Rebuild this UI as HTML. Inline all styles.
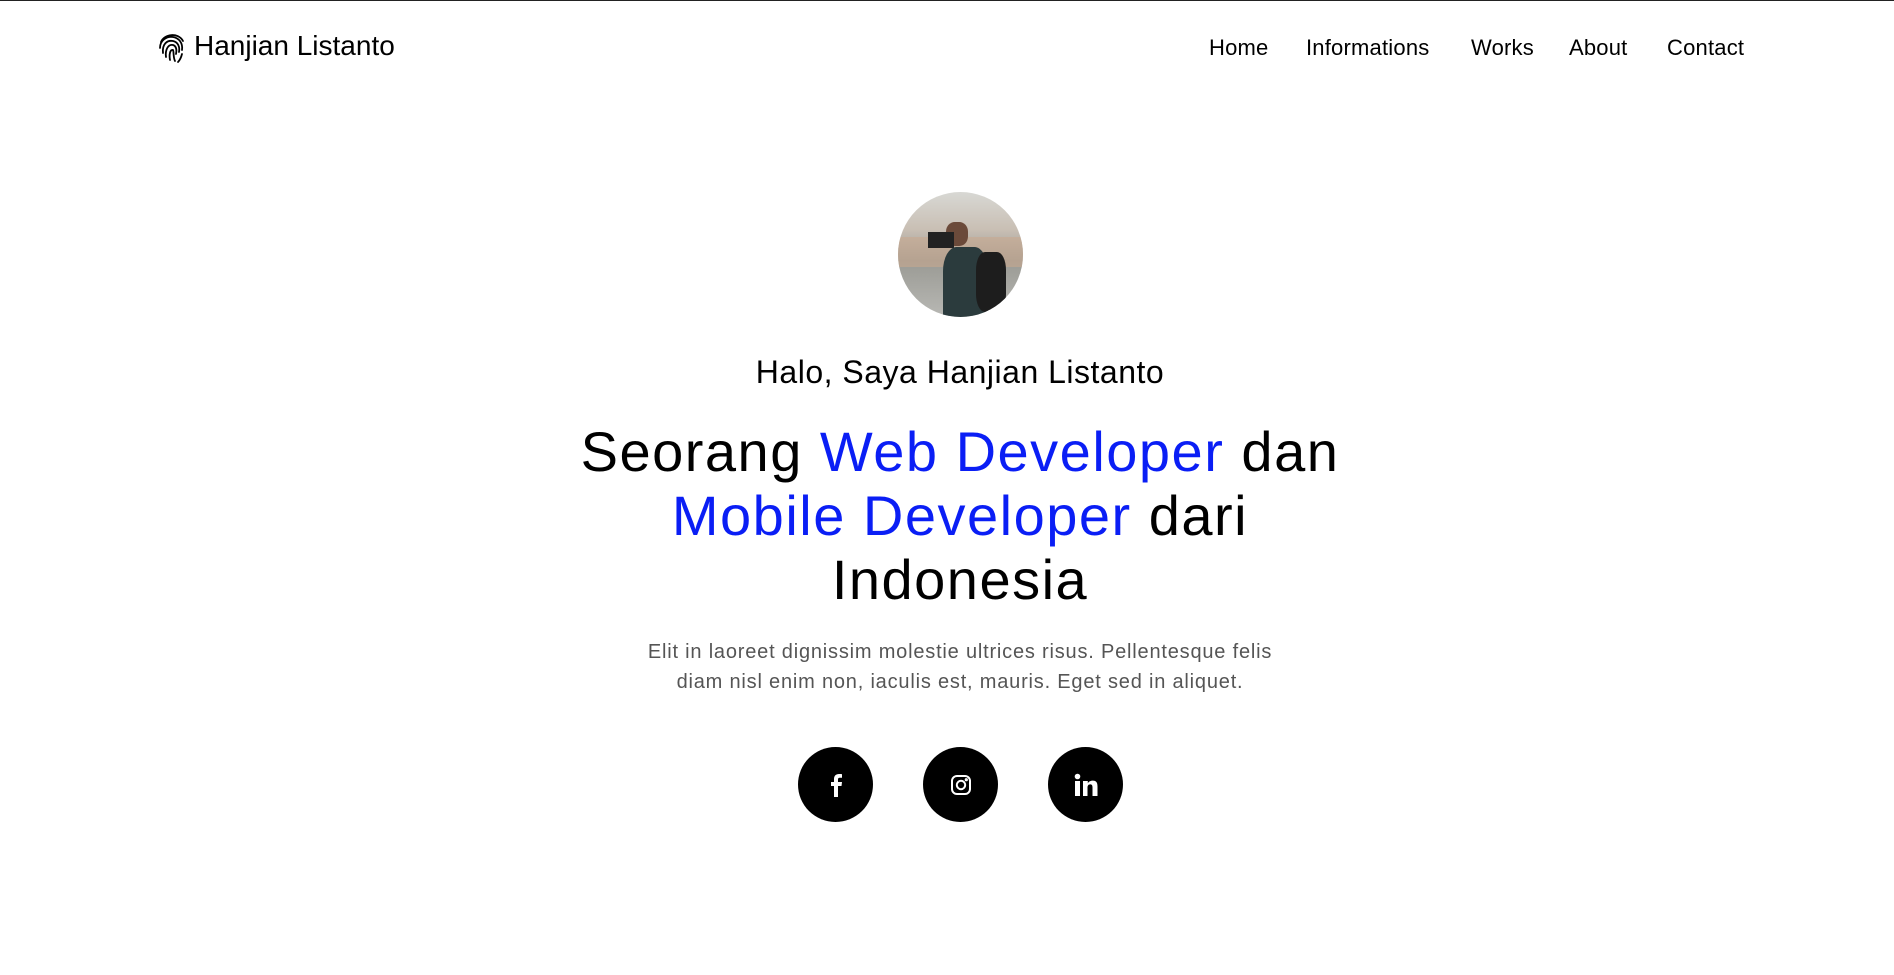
<!DOCTYPE html>
<html><head><meta charset="utf-8"><style>
*{margin:0;padding:0;box-sizing:border-box}
body{width:1894px;height:975px;background:#fff;font-family:"Liberation Sans",sans-serif;color:#000;position:relative;overflow:hidden;border-top:1px solid #222}
.abs{position:absolute;white-space:nowrap}
.nav{font-size:22px;top:34px;letter-spacing:0.2px}
.c{position:absolute;left:13px;width:1894px;text-align:center}
.blue{color:#0a1ef5}
.soc{position:absolute;top:746px;width:75px;height:75px;border-radius:50%;background:#000;display:flex;align-items:center;justify-content:center}
</style></head><body>
<svg class="abs" style="left:158px;top:29px" width="28" height="34" viewBox="0 0 28 34" fill="none" stroke="#000" stroke-width="1.8" stroke-linecap="round">
<path d="M3 12C6 4 20 2 25 11"/><path d="M2 18C2 10 9 6 15 7C21 8 25 13 24 20"/><path d="M5 23C4 14 9 10 15 11C20 12 22 17 21 22"/><path d="M8 27C7 20 10 14 15 15C18 16 19 19 18 24"/><path d="M12 30C11 25 12 19 15 20C16 22 15 27 17 31"/><path d="M24 24C23 28 22 30 20 32"/>
</svg>
<div class="abs" style="left:194px;top:29px;font-size:28px">Hanjian Listanto</div>
<div class="abs nav" style="left:1209px">Home</div>
<div class="abs nav" style="left:1306px">Informations</div>
<div class="abs nav" style="left:1471px">Works</div>
<div class="abs nav" style="left:1569px">About</div>
<div class="abs nav" style="left:1667px">Contact</div>
<div class="abs" style="left:898px;top:191px;width:125px;height:125px;border-radius:50%;overflow:hidden;background:linear-gradient(180deg,#d8d8d4 0%,#c9bfb4 30%,#9a9a94 55%,#b8b8b4 100%)">
<div style="position:absolute;left:0;top:45px;width:125px;height:30px;background:#c8a890;opacity:.6"></div>
<div style="position:absolute;left:48px;top:30px;width:22px;height:24px;border-radius:40%;background:#6b4a3a"></div>
<div style="position:absolute;left:30px;top:40px;width:26px;height:16px;background:#222"></div>
<div style="position:absolute;left:45px;top:55px;width:45px;height:80px;border-radius:30% 30% 0 0;background:#2b3b3d"></div>
<div style="position:absolute;left:78px;top:60px;width:30px;height:60px;border-radius:30%;background:#1d1d1d"></div>
</div>
<div class="c" style="top:353px;font-size:32px;letter-spacing:0.5px">Halo, Saya Hanjian Listanto</div>
<div class="c" style="top:419px;font-size:56px;line-height:64px;letter-spacing:1.5px">Seorang <span class="blue">Web Developer</span> dan<br><span class="blue">Mobile Developer</span> dari<br>Indonesia</div>
<div class="c" style="top:636px;font-size:20px;line-height:30px;color:#555;letter-spacing:0.8px">Elit in laoreet dignissim molestie ultrices risus. Pellentesque felis<br>diam nisl enim non, iaculis est, mauris. Eget sed in aliquet.</div>
<div class="soc" style="left:798px"><svg width="14" height="24" viewBox="0 0 14 24"><path fill="#fff" d="M9 24V13h3.5l.5-4H9V6.5C9 5.4 9.4 4.7 11 4.7h2V1.2C12.6 1.1 11.4 1 10 1 7 1 5 2.8 5 6.1V9H2v4h3v11z"/></svg></div>
<div class="soc" style="left:923px"><svg width="22" height="22" viewBox="0 0 22 22" fill="none" stroke="#fff" stroke-width="2"><rect x="2" y="2" width="18" height="18" rx="5"/><circle cx="11" cy="11" r="4.2"/><circle cx="16.3" cy="5.7" r="0.6" fill="#fff"/></svg></div>
<div class="soc" style="left:1048px"><svg width="24" height="24" viewBox="0 0 24 24" fill="#fff"><rect x="1" y="8" width="5" height="15"/><circle cx="3.5" cy="3.5" r="2.8"/><path d="M9 8h4.8v2.2C14.6 8.8 16.3 7.6 18.8 7.6 22.6 7.6 23.5 10 23.5 13.6V23h-5v-8.3c0-2-.4-3.3-2.3-3.3-2 0-2.7 1.4-2.7 3.4V23H9z"/></svg></div>
</body></html>
